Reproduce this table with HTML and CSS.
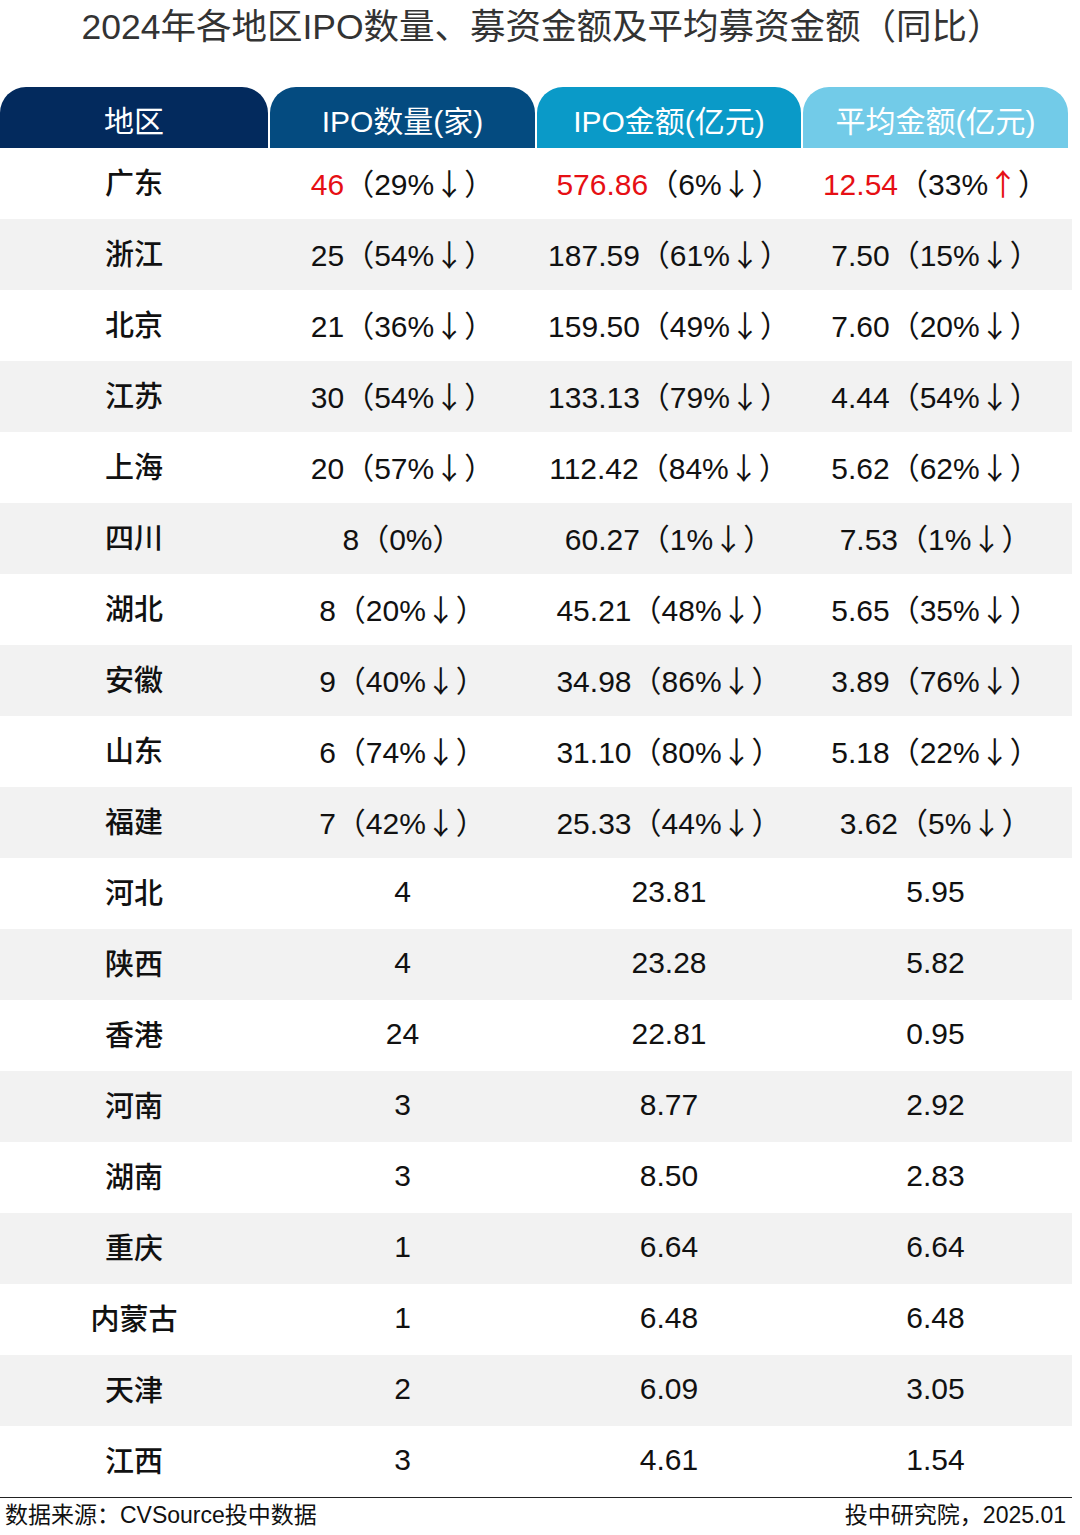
FILE: index.html
```html
<!DOCTYPE html>
<html lang="zh-CN">
<head>
<meta charset="utf-8">
<title>2024年各地区IPO数量、募资金额及平均募资金额（同比）</title>
<link rel="stylesheet" href="styles.css">
</head>
<body>
<div class="page">
  <h1 class="title">2024年各地区IPO数量、募资金额及平均募资金额（同比）</h1>
  <div class="head">
    <div class="tab t1">地区</div>
    <div class="tab t2">IPO数量(家)</div>
    <div class="tab t3">IPO金额(亿元)</div>
    <div class="tab t4">平均金额(亿元)</div>
  </div>
  <div class="rows">
    <div class="row"><div class="reg">广东</div><div class="val"><span class="red">46</span>（29%<span class="ar">↓</span>）</div><div class="val"><span class="red">576.86</span>（6%<span class="ar">↓</span>）</div><div class="val"><span class="red">12.54</span>（33%<span class="ar red">↑</span>）</div></div>
    <div class="row"><div class="reg">浙江</div><div class="val">25（54%<span class="ar">↓</span>）</div><div class="val">187.59（61%<span class="ar">↓</span>）</div><div class="val">7.50（15%<span class="ar">↓</span>）</div></div>
    <div class="row"><div class="reg">北京</div><div class="val">21（36%<span class="ar">↓</span>）</div><div class="val">159.50（49%<span class="ar">↓</span>）</div><div class="val">7.60（20%<span class="ar">↓</span>）</div></div>
    <div class="row"><div class="reg">江苏</div><div class="val">30（54%<span class="ar">↓</span>）</div><div class="val">133.13（79%<span class="ar">↓</span>）</div><div class="val">4.44（54%<span class="ar">↓</span>）</div></div>
    <div class="row"><div class="reg">上海</div><div class="val">20（57%<span class="ar">↓</span>）</div><div class="val">112.42（84%<span class="ar">↓</span>）</div><div class="val">5.62（62%<span class="ar">↓</span>）</div></div>
    <div class="row"><div class="reg">四川</div><div class="val">8（0%）</div><div class="val">60.27（1%<span class="ar">↓</span>）</div><div class="val">7.53（1%<span class="ar">↓</span>）</div></div>
    <div class="row"><div class="reg">湖北</div><div class="val">8（20%<span class="ar">↓</span>）</div><div class="val">45.21（48%<span class="ar">↓</span>）</div><div class="val">5.65（35%<span class="ar">↓</span>）</div></div>
    <div class="row"><div class="reg">安徽</div><div class="val">9（40%<span class="ar">↓</span>）</div><div class="val">34.98（86%<span class="ar">↓</span>）</div><div class="val">3.89（76%<span class="ar">↓</span>）</div></div>
    <div class="row"><div class="reg">山东</div><div class="val">6（74%<span class="ar">↓</span>）</div><div class="val">31.10（80%<span class="ar">↓</span>）</div><div class="val">5.18（22%<span class="ar">↓</span>）</div></div>
    <div class="row"><div class="reg">福建</div><div class="val">7（42%<span class="ar">↓</span>）</div><div class="val">25.33（44%<span class="ar">↓</span>）</div><div class="val">3.62（5%<span class="ar">↓</span>）</div></div>
    <div class="row"><div class="reg">河北</div><div class="val">4</div><div class="val">23.81</div><div class="val">5.95</div></div>
    <div class="row"><div class="reg">陕西</div><div class="val">4</div><div class="val">23.28</div><div class="val">5.82</div></div>
    <div class="row"><div class="reg">香港</div><div class="val">24</div><div class="val">22.81</div><div class="val">0.95</div></div>
    <div class="row"><div class="reg">河南</div><div class="val">3</div><div class="val">8.77</div><div class="val">2.92</div></div>
    <div class="row"><div class="reg">湖南</div><div class="val">3</div><div class="val">8.50</div><div class="val">2.83</div></div>
    <div class="row"><div class="reg">重庆</div><div class="val">1</div><div class="val">6.64</div><div class="val">6.64</div></div>
    <div class="row"><div class="reg">内蒙古</div><div class="val">1</div><div class="val">6.48</div><div class="val">6.48</div></div>
    <div class="row"><div class="reg">天津</div><div class="val">2</div><div class="val">6.09</div><div class="val">3.05</div></div>
    <div class="row"><div class="reg">江西</div><div class="val">3</div><div class="val">4.61</div><div class="val">1.54</div></div>
  </div>
  <div class="foot">
    <span>数据来源：CVSource投中数据</span>
    <span>投中研究院，2025.01</span>
  </div>
</div>
</body>
</html>
```

FILE: styles.css
```css
html, body {
  margin: 0;
  padding: 0;
  background: #ffffff;
}
.page {
  width: 1072px;
  font-family: "Liberation Sans", "Noto Sans CJK SC", sans-serif;
  color: #111111;
}
.title {
  margin: 0;
  height: 52px;
  line-height: 52px;
  padding-top: 1px;
  padding-left: 12px;
  box-sizing: border-box;
  font-size: 35.5px;
  font-weight: 400;
  color: #333333;
  text-align: center;
  margin-bottom: 35px;
}
.head {
  display: grid;
  grid-template-columns: 268px 265px 264px 265px;
  column-gap: 2px;
  height: 61px;
}
.tab {
  border-radius: 26px 26px 0 0;
  color: #ffffff;
  font-size: 30px;
  display: flex;
  align-items: center;
  justify-content: center;
  padding-top: 3px;
  box-sizing: border-box;
}
.t1 { background: #032a5d; }
.t2 { background: #044b80; }
.t3 { background: #0a9ac8; }
.t4 { background: #72cbe8; }
.row {
  display: grid;
  grid-template-columns: 268px 265px 264px 265px;
  column-gap: 2px;
  height: 71px;
  align-items: center;
}
.row:nth-child(even) {
  background: #f2f2f2;
}
.reg {
  text-align: center;
  font-family: "Noto Sans CJK SC", sans-serif;
  font-weight: 500;
  font-size: 29px;
  color: #111111;
  padding-bottom: 5px;
}
.val {
  text-align: center;
  font-size: 30px;
  white-space: nowrap;
  padding-bottom: 4px;
}
.ar {
  font-family: "Noto Sans CJK SC", sans-serif;
}
.red {
  color: #e60f14;
}
.foot {
  border-top: 1px solid #222222;
  display: flex;
  justify-content: space-between;
  height: 36px;
  line-height: 34px;
  font-size: 23px;
  padding: 0 6px 0 5px;
  color: #111111;
}
```
